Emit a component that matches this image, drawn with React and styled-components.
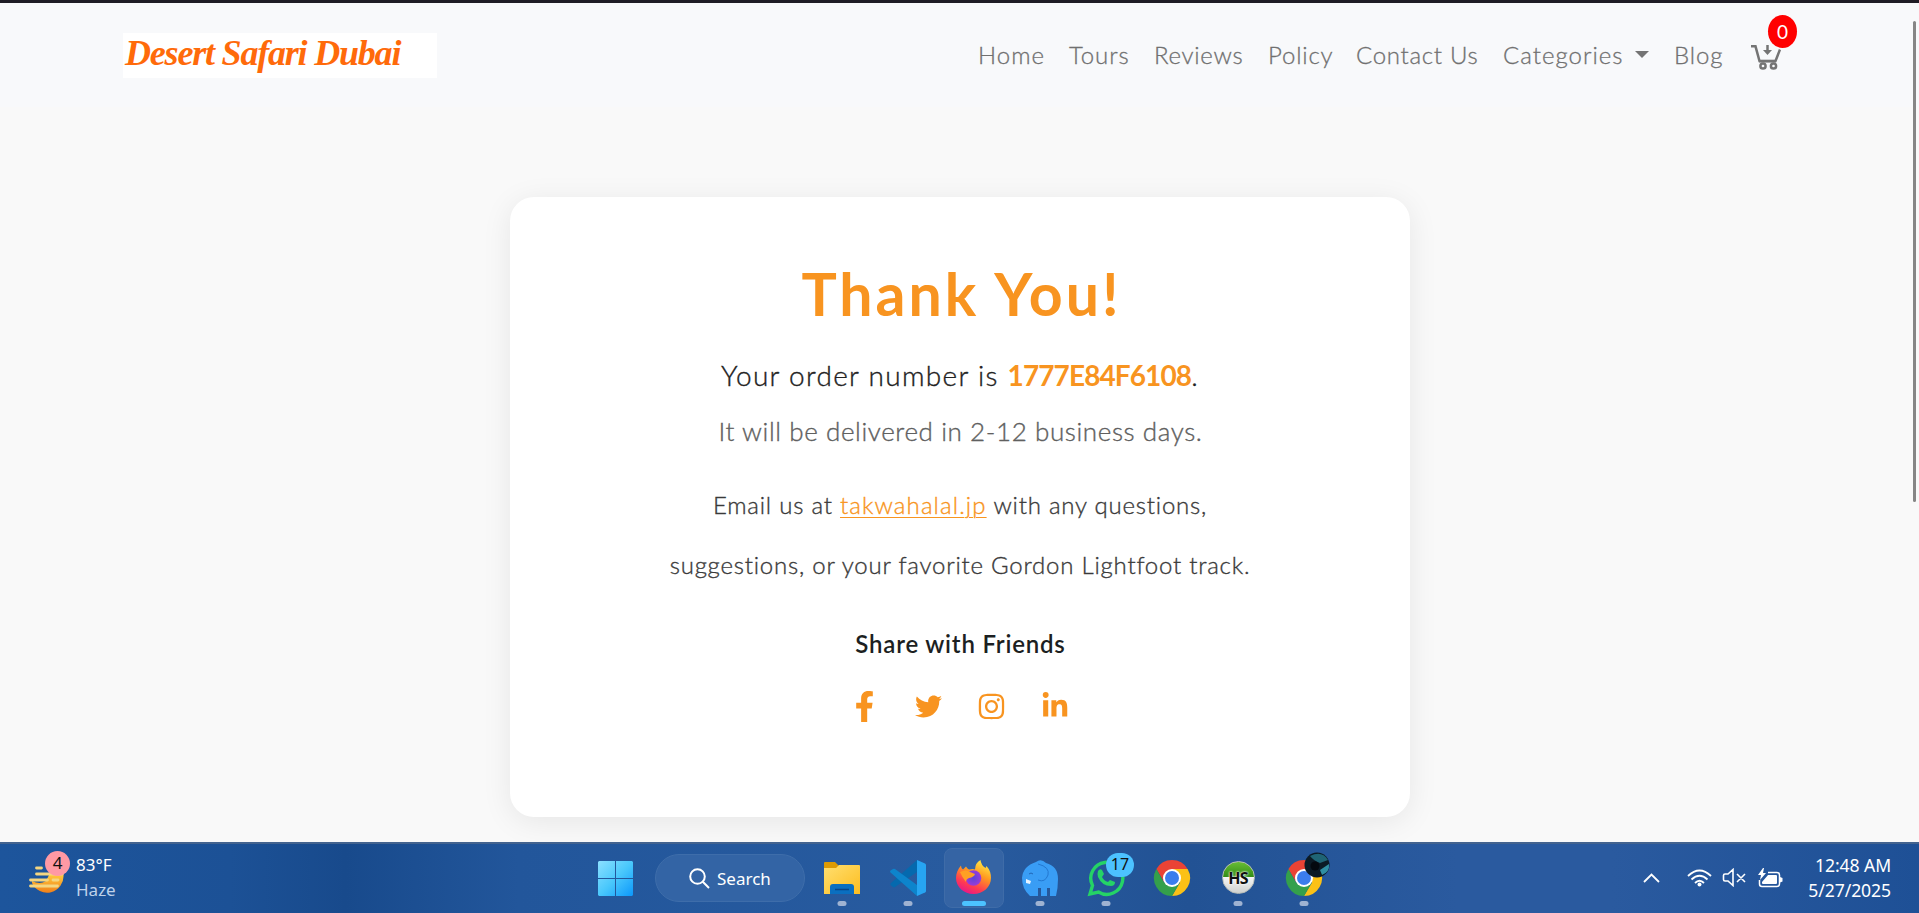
import React from 'react';
import styled, { createGlobalStyle } from 'styled-components';
import { FaFacebookF, FaTwitter, FaInstagram, FaLinkedinIn } from 'react-icons/fa';

const Global = createGlobalStyle`
  * { box-sizing: border-box; }
  body { margin: 0; overflow: hidden; background: #f9f9f9; font-family: Lato, "Noto Sans", sans-serif; }
  p, h1, h2 { margin: 0; }
`;

const Screen = styled.div`
  position: relative;
  display: flex;
  flex-direction: column;
  width: 1919px;
  height: 913px;
  overflow: hidden;
`;
const Header = styled.header`
  display: flex;
  align-items: flex-start;
  flex: none;
  height: 107px;
  padding-left: 123px;
  border-top: 3px solid #1f1c25;
  background: #f8f9fb;
`;
const Logo = styled.div`
  flex: none;
  width: 314px;
  height: 45px;
  margin: 30px 541px 0 0;
  padding-left: 2px;
  background: #fff;
  color: #ff6a0a;
  font: italic 700 36px/41px "Liberation Serif", serif;
  letter-spacing: -1.2px;
  white-space: nowrap;
`;
const Nav = styled.nav`
  display: flex;
  height: 36px;
  margin-top: 34px;
`;
const NavLink = styled.a`
  display: flex;
  align-items: center;
  flex: none;
  width: ${(p) => p.$w}px;
  color: #707070;
  font-size: 24px;
  font-weight: 300;
  line-height: 36px;
  letter-spacing: ${(p) => p.$ls}px;
  white-space: nowrap;
  -webkit-text-stroke: 0.3px currentColor;
`;
const Caret = styled.i`
  margin: -2px 0 0 12px;
  border: 7px solid transparent;
  border-top-color: #747474;
  border-bottom: 0;
`;
const Cart = styled.div`
  position: relative;
  width: 46px;
  height: 36px;
  padding: 8px 0 0 2px;
  svg { display: block; }
`;
const CartCount = styled.span`
  position: absolute;
  left: 19px;
  top: -22px;
  width: 29px;
  height: 33px;
  border-radius: 50%;
  background: #f00;
  color: #fff;
  font-size: 19px;
  line-height: 33px;
  text-align: center;
`;
const Main = styled.main`
  flex: 1;
  display: flex;
  justify-content: center;
  align-items: flex-start;
  padding-top: 90px;
`;
const Card = styled.section`
  display: flex;
  flex-direction: column;
  align-items: center;
  width: 900px;
  height: 620px;
  padding-top: 57px;
  border-radius: 24px;
  background: #fff;
  box-shadow: 0 5px 30px rgba(0, 0, 0, 0.08);
`;
const Line = styled.p`
  height: ${(p) => p.$h}px;
  margin-top: ${(p) => p.$mt || 0}px;
  padding-left: ${(p) => p.$shift || 1}px;
  color: ${(p) => p.$color};
  font-size: ${(p) => p.$size}px;
  font-weight: ${(p) => p.$weight || 300};
  line-height: ${(p) => p.$h}px;
  letter-spacing: ${(p) => p.$ls || 0}px;
  white-space: nowrap;
  -webkit-text-stroke: ${(p) => (p.$weight ? 0 : 0.35)}px currentColor;
`;
const OrderNumber = styled.strong`
  color: #f89420;
  font-weight: 700;
  letter-spacing: -0.9px;
  -webkit-text-stroke: 0;
`;
const MailLink = styled.a`
  color: #f89420;
  letter-spacing: 1.1px;
  text-decoration: underline;
  text-decoration-thickness: 1px;
  text-underline-offset: 3px;
`;
const Social = styled.div`
  display: flex;
  align-items: center;
  gap: 35px;
  height: 34px;
  margin: 25px 2px 0 0;
  color: #f89420;
`;

const Taskbar = styled.footer`
  position: absolute;
  left: 0;
  bottom: 0;
  display: flex;
  width: 1919px;
  height: 71px;
  border-top: 2px solid #43638f;
  background: linear-gradient(90deg, #1d559c 0%, #1c5196 12%, #184a8c 18%, #22569b 27%, #285b9f 50%, #225294 62%, #2a5a9f 76%, #2a5a9f 84%, #1e5096 100%);
  color: #fff;
  font-family: "Noto Sans", sans-serif;
`;
const Weather = styled.div`
  display: flex;
  gap: 11px;
  width: 592px;
  padding: 9px 0 0 29px;
  font-size: 17px;
  line-height: 24.5px;
  svg { flex: none; display: block; margin-top: -2px; }
`;
const Muted = styled.div`
  color: #bfd2ea;
`;
const Apps = styled.div`
  display: flex;
  align-items: flex-start;
  width: 1039px;
`;
const Start = styled.div`
  width: 63px;
  padding: 17px 0 0 6px;
`;
const Search = styled.div`
  display: flex;
  align-items: center;
  gap: 7px;
  width: 150px;
  height: 48px;
  margin: 10px 4px 0 0;
  padding-left: 33px;
  border: 1px solid #3e6daa;
  border-radius: 24px;
  background: #3364a5;
  font-size: 17px;
`;
const TaskApp = styled.div`
  position: relative;
  display: flex;
  justify-content: center;
  width: 60px;
  height: 60px;
  margin: 4px 3px 0;
  padding-top: 11px;
  border: 1px solid ${(p) => (p.$active ? '#3f6ca8' : 'transparent')};
  border-radius: 8px;
  background: ${(p) => (p.$active ? '#3564a4' : 'transparent')};
  svg { overflow: visible; }
  &::after {
    content: '';
    position: absolute;
    bottom: 1px;
    left: 50%;
    width: ${(p) => (p.$active ? 24 : 9)}px;
    height: 5px;
    border-radius: 3px;
    background: ${(p) => (p.$active ? '#4cc2ff' : '#9fb3d2')};
    transform: translateX(-50%);
    display: ${(p) => (p.$idle ? 'none' : 'block')};
  }
`;
const Unread = styled.span`
  position: absolute;
  left: 29px;
  top: 4px;
  width: 28px;
  height: 24px;
  border-radius: 12px;
  background: #4cc2ff;
  color: #111;
  font-size: 16px;
  line-height: 23px;
  text-align: center;
`;
const Tray = styled.div`
  display: flex;
  align-items: center;
  gap: 10px;
  width: 152px;
  padding: 0 0 2px 12px;
`;
const Chevron = styled.svg`
  margin-right: 17px;
`;
const Clock = styled.div`
  flex: 1;
  padding: 9px 28px 0 0;
  font-size: 17.6px;
  line-height: 24.5px;
  letter-spacing: -0.1px;
  text-align: right;
  white-space: nowrap;
`;
const ScrollThumb = styled.div`
  position: absolute;
  left: 1913px;
  top: 21px;
  width: 3px;
  height: 481px;
  border-radius: 2px;
  background: #868686;
`;

const links = [
  ['Home', 91, 1],
  ['Tours', 85, 0.9],
  ['Reviews', 114, 0.7],
  ['Policy', 88, 0.8],
  ['Contact Us', 147, 0.7],
  ['Categories', 171, 1],
  ['Blog', 75, 0.9],
];

const CartIcon = () => (
  <svg width="30" height="26" viewBox="0 0 30 26" fill="none" stroke="#747474" strokeWidth="2.500">
    <path d="M0 1.300h4.500l4 14.700h16L29 4.500" />
    <path d="M8 16.200h17" />
    <path d="M16.500 0v6" />
    <path d="M12 5h9l-4.500 5z" fill="#747474" stroke="none" />
    <circle cx="12" cy="21" r="2.600" />
    <circle cx="22.500" cy="21" r="2.600" />
  </svg>
);

const HazeIcon = () => (
  <svg width="36" height="44" viewBox="0 0 36 44">
    <defs>
      <linearGradient id="sun" x1="0" y1="0" x2="0" y2="1">
        <stop offset="0" stopColor="#ffc83d" />
        <stop offset="1" stopColor="#f0801a" />
      </linearGradient>
    </defs>
    <path fill="url(#sun)" d="M3 30q8 4 14 0l3-6h14.500A16.500 16.500 0 0 1 3 32z" />
    <g stroke="#f4d681" strokeWidth="2.800" strokeLinecap="round">
      <path d="M7.500 17h5M7.500 23h26M1.500 29h17M24 29h5M1.500 35h27" />
    </g>
  </svg>
);
const WeatherBadge = styled.span`
  position: absolute;
  left: 45px;
  top: 7px;
  width: 25px;
  height: 25px;
  border-radius: 50%;
  background: #ff99a4;
  color: #111;
  font-size: 17px;
  line-height: 24px;
  text-align: center;
`;

const WindowsIcon = () => (
  <svg width="35" height="35" viewBox="0 0 35 35">
    <defs>
      <linearGradient id="win" x1="0" y1="0" x2="1" y2="1">
        <stop offset="0" stopColor="#8be0ff" />
        <stop offset=".5" stopColor="#4ac8fc" />
        <stop offset="1" stopColor="#0c98fb" />
      </linearGradient>
    </defs>
    <path fill="url(#win)" d="M1 0h16v17H0V1zM18 0h16l1 1v16H18zM0 18h17v17H1l-1-1zM18 18h17v16l-1 1H18z" />
  </svg>
);
const SearchIcon = () => (
  <svg width="21" height="21" viewBox="0 0 21 21" fill="none" stroke="#fff" strokeWidth="2">
    <circle cx="8.500" cy="8.500" r="7.300" />
    <path d="M13.800 13.800 20 20" />
  </svg>
);
const FolderIcon = () => (
  <svg width="36" height="36" viewBox="0 -1 36 36">
    <defs>
      <linearGradient id="fold" x1="0" y1="0" x2="1" y2="1">
        <stop offset="0" stopColor="#ffdf70" />
        <stop offset="1" stopColor="#fdbd1f" />
      </linearGradient>
    </defs>
    <path fill="#dc9a04" d="M0 2q0-1 1-1h10l4 4v6H0z" />
    <path fill="url(#fold)" d="M0 7h12l3-3h20q1 0 1 1v28H0z" />
    <path fill="#0a6fc0" d="M6 33v-7q0-3 3-3h18q3 0 3 3v7z" />
    <path stroke="#06458a" strokeWidth="1.500" d="M11 28.500h14" />
  </svg>
);
const CodeIcon = () => (
  <svg width="36" height="36" viewBox="0 0 36 36">
    <path fill="#0569ae" d="M.5 23.500 27 0v12L5 27q-1 .6-2 0l-2.500-2z" />
    <path fill="#0d84cc" d="M.5 12.500q-1-1 0-2L3 9q1-.6 2 0l22 16v11z" />
    <path fill="#27a5f2" d="M27 0l8 3.500q1 .5 1 1.500v26q0 1-1 1.500L27 36z" />
  </svg>
);
const FirefoxIcon = () => (
  <svg width="36" height="36" viewBox="0 0 36 36">
    <defs>
      <linearGradient id="ff" x1="0.800" y1="0" x2=".3" y2="1">
        <stop offset="0" stopColor="#fff24a" />
        <stop offset=".4" stopColor="#ff9a20" />
        <stop offset=".75" stopColor="#ff3b50" />
        <stop offset="1" stopColor="#e6158c" />
      </linearGradient>
      <radialGradient id="ffc">
        <stop offset="0" stopColor="#5a45d8" />
        <stop offset="1" stopColor="#9a3bd8" />
      </radialGradient>
    </defs>
    <path fill="url(#ff)" d="M5 5.500q0 3 2 4l3-3q1 2 3 3 4-1 6 0Q19 3 24.500 0q.5 5 5 8l1-2q4.500 5 4.500 12c0 9-8 16-17.500 16S0 27 0 18c0-5 2-9 5-12.500z" />
    <circle cx="17.500" cy="18" r="7.800" fill="url(#ffc)" />
    <path fill="#ffa024" d="M4 12q6-3 10 0l5 2q-1 3-6 4-3 1-3 4-4-5-6-10z" />
  </svg>
);
const ElephantIcon = () => (
  <svg width="36" height="36" viewBox="0 0 36 36">
    <path fill="#399df5" d="M14 2q5-4 10 1 12 3 12 16 0 9-2 17h-6v-8h-3v8h-6v-8h-3v8H8Q0 29 0 18 1 6 14 2z" />
    <path d="M16 4q12 3 10 11-3 8-10 5" fill="none" stroke="#2377d0" strokeWidth="1" />
    <path d="M7 14q2-2 4 0" fill="none" stroke="#2066b5" strokeWidth="1" />
    <path d="M4 19l5 2-1 3-4-1z" fill="#e8f3ff" />
  </svg>
);
const WhatsAppIcon = () => (
  <svg width="36" height="36" viewBox="0 0 36 36">
    <path d="M2 34l2.500-8.500A16 16 0 1 1 10.500 32z" fill="none" stroke="#25d366" strokeWidth="3.400" />
    <path fill="#25d366" d="M10 11q2-3 4-1l2 4-2 3q2 4 6 5l2-2 5 2q0 4-4 4-9 0-13-9-1-3 0-6z" />
  </svg>
);
const ChromeIcon = ({ children }) => (
  <svg width="36" height="36" viewBox="0 0 36 36">
    <path fill="#ea4335" d="M2.400 9A18 18 0 0 1 33.600 9H18l-8 13z" />
    <path fill="#fbc116" d="M33.600 9A18 18 0 0 1 18 36l8-13.500L18 9z" />
    <path fill="#34a04b" d="M2.400 9A18 18 0 0 0 18 36l7.800-13.500L10 22.500z" />
    <circle cx="18" cy="18" r="9" fill="#fff" />
    <circle cx="18" cy="18" r="7" fill="#3b7ded" />
    {children}
  </svg>
);
const HsBadge = styled.div`
  width: 33px;
  height: 33px;
  margin-top: 1px;
  border: 1px solid #b8bdb8;
  border-radius: 50%;
  background: linear-gradient(#69bd35 0, #318d15 49%, #f5f5f5 50%, #cfd1cf 100%);
  color: #101010;
  font: 700 16px/33px "Open Sans", sans-serif;
  letter-spacing: -0.8px;
  text-align: center;
  text-shadow: 0 0 2px #fff, 0 0 2px #fff;
`;

const UpIcon = () => (
  <Chevron width="17" height="10" viewBox="0 0 17 10" fill="none" stroke="#fff" strokeWidth="1.800">
    <path d="M1 9l7.500-7.500L16 9" />
  </Chevron>
);
const WifiIcon = () => (
  <svg width="25" height="18" viewBox="0 0 25 18" fill="none" stroke="#fff" strokeWidth="1.800">
    <path d="M1 7q11.500-11 23 0M4.500 10.500q8-7.500 16 0M8 14q4.500-4.500 9 0" />
    <circle cx="12.500" cy="15.500" r="2" fill="#fff" stroke="none" />
  </svg>
);
const MuteIcon = () => (
  <svg width="26" height="19" viewBox="0 0 26 19" fill="none" stroke="#fff" strokeWidth="1.600">
    <path d="M3 6h3l5-4.500v16L6 13H3q-1.500 0-1.500-1.500v-4Q1.500 6 3 6zM15 6l8 8M23 6l-8 8" />
  </svg>
);
const BatteryIcon = () => (
  <svg width="25" height="20" viewBox="0 0 25 20" fill="none" stroke="#fff" strokeWidth="1.500">
    <path d="M10 4.500h9q2.500 0 2.500 2.500v9q0 2.500-2.500 2.500H4Q1.500 18.500 1.500 16v-4" />
    <path fill="#fff" stroke="none" d="M10 7h8q1 0 1 1v7q0 1-1 1H5q-1 0-1-1v-1zM22 9l2.500 1v3.500l-2.500 1zM5 0L0 7h3l-1 5 6-7H5l1-5z" />
  </svg>
);

export default function App() {
  return (
    <Screen>
      <Global />
      <Header>
        <Logo>Desert Safari Dubai</Logo>
        <Nav>
          {links.map(([label, w, ls]) => (
            <NavLink key={label} $w={w} $ls={ls}>
              {label}
              {label === 'Categories' && <Caret />}
            </NavLink>
          ))}
          <Cart>
            <CartIcon />
            <CartCount>0</CartCount>
          </Cart>
        </Nav>
      </Header>
      <Main>
        <Card>
          <Line as="h1" $h={80} $size={59} $weight={700} $ls={3} $shift={4} $color="#f89420">Thank You!</Line>
          <Line $h={82} $size={28} $ls={1.3} $color="#222">
            Your order number is <OrderNumber>1777E84F6108</OrderNumber>.
          </Line>
          <Line $h={30} $size={26} $ls={0.6} $shift={2} $color="#606060">It will be delivered in 2-12 business days.</Line>
          <Line $h={60} $mt={29} $size={24} $ls={0.78} $color="#3a3a3a">
            Email us at <MailLink>takwahalal.jp</MailLink> with any questions,
          </Line>
          <Line $h={60} $size={24} $ls={0.77} $color="#3a3a3a">suggestions, or your favorite Gordon Lightfoot track.</Line>
          <Line as="h2" $h={40} $mt={29} $size={24} $weight={600} $ls={0.8} $shift={2} $color="#1c1f22">Share with Friends</Line>
          <Social>
            <FaFacebookF size={31} />
            <FaTwitter size={27} />
            <FaInstagram size={29} />
            <FaLinkedinIn size={28} />
          </Social>
        </Card>
      </Main>
      <Taskbar>
        <Weather>
          <HazeIcon />
          <WeatherBadge>4</WeatherBadge>
          <div>
            <div>83°F</div>
            <Muted>Haze</Muted>
          </div>
        </Weather>
        <Apps>
          <Start><WindowsIcon /></Start>
          <Search><SearchIcon />Search</Search>
          <TaskApp><FolderIcon /></TaskApp>
          <TaskApp><CodeIcon /></TaskApp>
          <TaskApp $active><FirefoxIcon /></TaskApp>
          <TaskApp><ElephantIcon /></TaskApp>
          <TaskApp><WhatsAppIcon /><Unread>17</Unread></TaskApp>
          <TaskApp $idle><ChromeIcon /></TaskApp>
          <TaskApp><HsBadge>HS</HsBadge></TaskApp>
          <TaskApp>
            <ChromeIcon>
              <circle cx="31" cy="5" r="12.500" fill="#0b1a25" />
              <path fill="#1f6475" d="M24-4q12-6 18 4l-8 3q-6-2-10-7z" />
              <path fill="#2f8ea3" d="M43 4q1 8-7 11l-2-5z" />
              <circle cx="29" cy="6" r="4.500" fill="#04090f" />
            </ChromeIcon>
          </TaskApp>
        </Apps>
        <Tray>
          <UpIcon />
          <WifiIcon />
          <MuteIcon />
          <BatteryIcon />
        </Tray>
        <Clock>
          <div>12:48 AM</div>
          <div>5/27/2025</div>
        </Clock>
      </Taskbar>
      <ScrollThumb />
    </Screen>
  );
}
